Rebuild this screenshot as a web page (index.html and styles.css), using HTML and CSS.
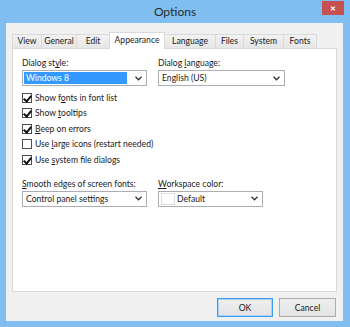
FILE: index.html
```html
<!DOCTYPE html>
<html lang="en">
<head>
  <meta charset="UTF-8">
  <title>Options</title>
  <link rel="stylesheet" href="styles.css">
</head>
<body>
  <div class="window">
    <div class="titlebar">
      <span class="title">Options</span>
      <span class="close">&#x2715;</span>
    </div>
    <div class="client">
      <ul class="tabs">
        <li>View</li>
        <li>General</li>
        <li>Edit</li>
        <li class="active">Appearance</li>
        <li>Language</li>
        <li>Files</li>
        <li>System</li>
        <li>Fonts</li>
      </ul>
      <div class="panel">
        <div class="row">
          <div class="field">
            <label>Dialog st<u>y</u>le:</label>
            <div class="select focus">
              <span class="value selected">Windows 8</span>
              <svg class="arrow" width="7" height="5" viewBox="0 0 7 5"><path d="M0.5 0.8 L3.5 3.8 L6.5 0.8" fill="none" stroke="#333" stroke-width="1.3"/></svg>
            </div>
          </div>
          <div class="field wide">
            <label>Dialog <u>l</u>anguage:</label>
            <div class="select">
              <span class="value">English (US)</span>
              <svg class="arrow" width="7" height="5" viewBox="0 0 7 5"><path d="M0.5 0.8 L3.5 3.8 L6.5 0.8" fill="none" stroke="#333" stroke-width="1.3"/></svg>
            </div>
          </div>
        </div>

        <ul class="checks">
          <li><span class="box on"></span><span>Show f<u>o</u>nts in font list</span></li>
          <li><span class="box on"></span><span>Show <u>t</u>ooltips</span></li>
          <li><span class="box on"></span><span><u>B</u>eep on errors</span></li>
          <li><span class="box"></span><span>Use <u>l</u>arge icons (restart needed)</span></li>
          <li><span class="box on"></span><span>Use <u>s</u>ystem file dialogs</span></li>
        </ul>

        <div class="row">
          <div class="field">
            <label><u>S</u>mooth edges of screen fonts:</label>
            <div class="select">
              <span class="value">Control panel settings</span>
              <svg class="arrow" width="7" height="5" viewBox="0 0 7 5"><path d="M0.5 0.8 L3.5 3.8 L6.5 0.8" fill="none" stroke="#333" stroke-width="1.3"/></svg>
            </div>
          </div>
          <div class="field">
            <label><u>W</u>orkspace color:</label>
            <div class="select short">
              <span class="swatch"></span>
              <span class="value">Default</span>
              <svg class="arrow" width="7" height="5" viewBox="0 0 7 5"><path d="M0.5 0.8 L3.5 3.8 L6.5 0.8" fill="none" stroke="#333" stroke-width="1.3"/></svg>
            </div>
          </div>
        </div>
      </div>
      <div class="buttons">
        <button class="default">OK</button>
        <button>Cancel</button>
      </div>
    </div>
  </div>
</body>
</html>
```

FILE: styles.css
```css
body {
  margin: 0;
  font-family: Lato, "Noto Sans", sans-serif;
  font-size: 8.6px;
  color: #1a1a1a;
}

.window {
  width: 350px;
  height: 327px;
  box-sizing: border-box;
  background-color: #80bdf0;
  padding: 0 7px 6px 6px;
  display: flex;
  flex-direction: column;
}

.titlebar {
  height: 23px;
  position: relative;
  display: flex;
  justify-content: center;
  align-items: center;
}
.title {
  font-size: 12px;
  color: #2b2b2b;
  margin-top: -1px;
  margin-left: 1px;
}
.close {
  position: absolute;
  right: -1px;
  top: 1px;
  width: 22px;
  height: 14px;
  background-color: #c75050;
  color: white;
  font-size: 7px;
  font-weight: bold;
  display: flex;
  align-items: center;
  justify-content: center;
}

.client {
  flex: 1;
  background-color: #f0f0f0;
  padding: 9px 6px 0 6px;
  display: flex;
  flex-direction: column;
}

.tabs {
  list-style: none;
  margin: 0;
  padding: 0;
  display: flex;
  align-items: flex-end;
  height: 16px;
  position: relative;
  z-index: 1;
}
.tabs li {
  box-sizing: border-box;
  height: 14px;
  border: 1px solid #d9d9d9;
  border-bottom: none;
  border-left-width: 0;
  background: linear-gradient(#f2f2f2, #e6e6e6);
  text-align: center;
  line-height: 13px;
  white-space: nowrap;
}
.tabs li:first-child { border-left-width: 1px; }
.tabs li:nth-child(1) { width: 30px; }
.tabs li:nth-child(2) { width: 35px; }
.tabs li:nth-child(3) { width: 33px; }
.tabs li:nth-child(4) { width: 56px; }
.tabs li:nth-child(5) { width: 51px; }
.tabs li:nth-child(6) { width: 28px; }
.tabs li:nth-child(7) { width: 40px; }
.tabs li:nth-child(8) { width: 33px; }
.tabs li.active {
  height: 17px;
  margin-bottom: -1px;
  background: white;
  border-left-width: 1px;
  margin-left: -1px;
  line-height: 15px;
}

.panel {
  height: 244px;
  box-sizing: border-box;
  background-color: white;
  border: 1px solid #d9d9d9;
  padding: 7px 9px 0 9px;
}

.row {
  display: flex;
  gap: 11px;
}
.field {
  width: 125px;
  display: flex;
  flex-direction: column;
}
.field.wide {
  width: 127px;
}
.field label {
  height: 14px;
  line-height: 14px;
  white-space: nowrap;
}

.select {
  box-sizing: border-box;
  height: 16px;
  border: 1px solid #abadb3;
  background: white;
  display: flex;
  align-items: center;
  padding: 0 4px 0 1px;
  gap: 2px;
}
.select.short {
  width: 105px;
}
.select .value {
  flex: 1;
  line-height: 12px;
  padding-left: 2px;
}
.select .value.selected {
  background-color: #3399ff;
  color: white;
  margin-right: 6px;
}
.select .swatch {
  width: 12px;
  height: 10px;
  border: 1px solid #dcdcdc;
  margin-left: 1px;
}
.select .swatch + .value {
  padding-left: 0;
}

.checks {
  list-style: none;
  margin: 4px 0 9px 0;
  padding: 0;
}
.checks li {
  height: 15.5px;
  display: flex;
  align-items: center;
  gap: 3px;
  white-space: nowrap;
}
.box {
  box-sizing: border-box;
  width: 10px;
  height: 10px;
  border: 1px solid #4d4d4d;
  background: white;
  position: relative;
}
.box.on::after {
  content: "";
  position: absolute;
  left: 2px;
  top: 0px;
  width: 3px;
  height: 6px;
  border: solid #111;
  border-width: 0 2px 2px 0;
  transform: rotate(40deg);
}

.buttons {
  display: flex;
  justify-content: flex-end;
  gap: 6px;
  padding: 6px 1px 0 0;
}
.buttons button {
  box-sizing: border-box;
  width: 57px;
  height: 19px;
  font: inherit;
  color: #1a1a1a;
  border: 1px solid #acacac;
  background: linear-gradient(#efefef, #e3e3e3);
  padding: 0;
}
.buttons button.default {
  width: 56px;
  border-color: #3c9cf0;
  box-shadow: inset 0 0 0 1px #a8d2f7;
}
```
